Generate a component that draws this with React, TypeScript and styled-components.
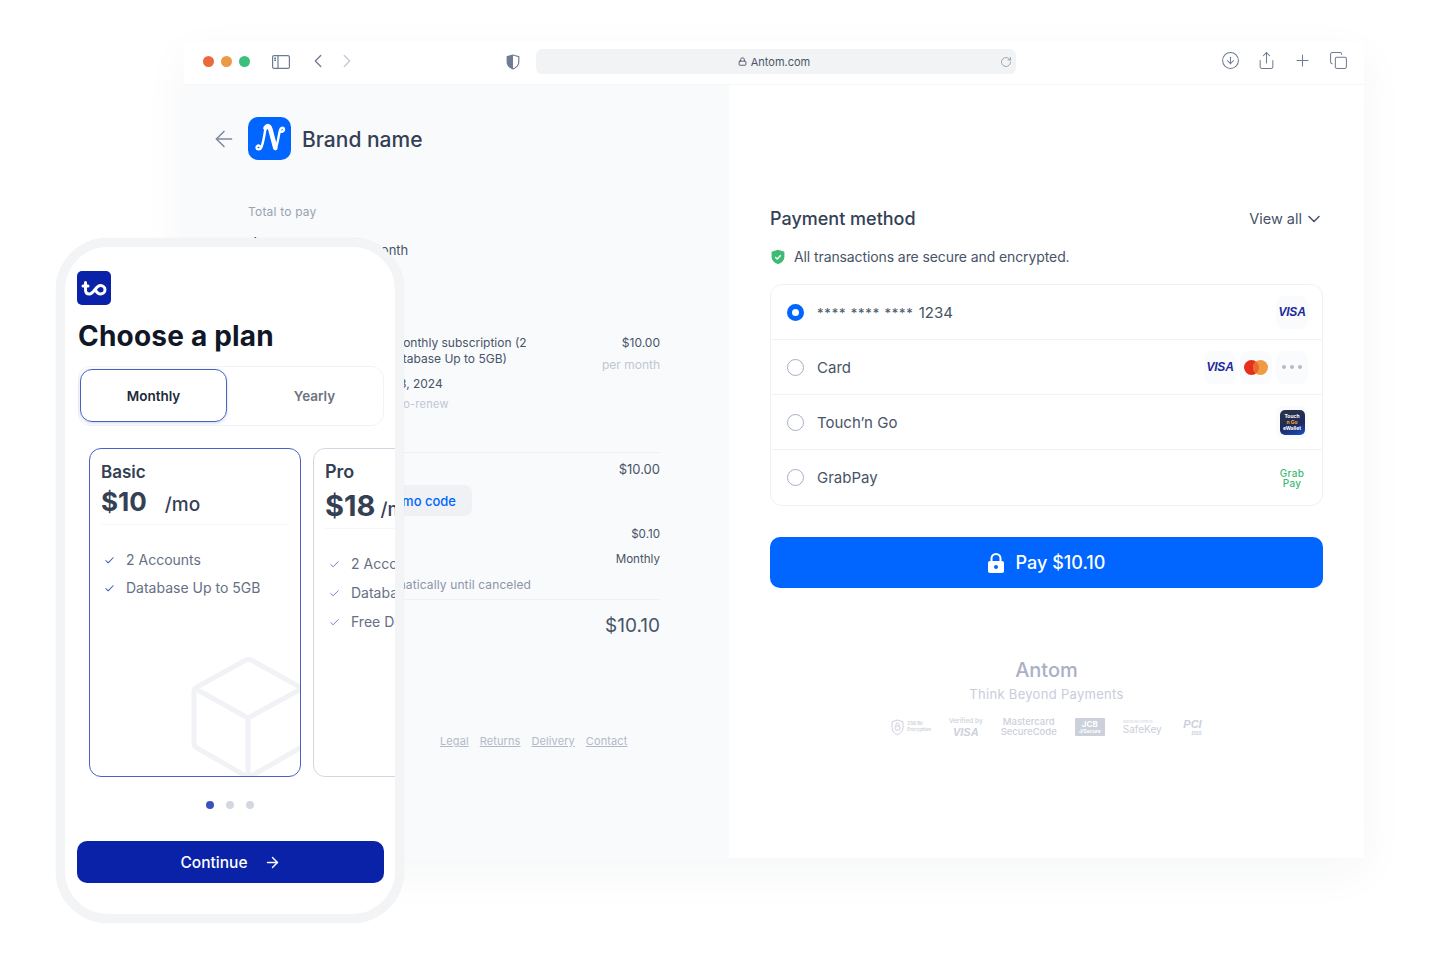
import styled, { createGlobalStyle } from 'styled-components';
import { ArrowLeft, ArrowRight, Check, ChevronDown, ChevronLeft, ChevronRight, CircleArrowDown, Copy, Lock, Plus, RotateCw, Share } from 'lucide-react';

const GlobalStyle = createGlobalStyle`
  html, body { margin: 0; padding: 0; background: #fff; }
  * { box-sizing: border-box; }
  body { font-family: Inter, "Liberation Sans", sans-serif; color: #344054; }
`

const Stage = styled.div`
  position: relative;
  width: 1440px;
  height: 960px;
  overflow: hidden;
  background: #fff;
`

/* browser window */
const BrowserWindow = styled.div`
  position: absolute;
  left: 184px;
  top: 42px;
  width: 1180px;
  height: 816px;
  display: flex;
  flex-direction: column;
  background: #fff;
  box-shadow: 0 14px 44px rgba(30, 40, 70, 0.045);
`
const Toolbar = styled.div`
  height: 43px;
  flex: none;
  display: flex;
  align-items: center;
  padding: 0 16px 3px 19px;
  border-bottom: 1px solid #f6f7f9;
  color: #6f7b93;
`
const Lights = styled.div`
  display: flex;
  gap: 7px;
  margin-right: 22px;
`
const Light = styled.span<{ $color: string }>`
  width: 11px;
  height: 11px;
  border-radius: 50%;
  background: ${p => p.$color};
`
const NavGroup = styled.div`
  display: flex;
  gap: 7px;
  margin: 0 148px 2px 17px;
`
const AddressBar = styled.div`
  width: 480px;
  height: 25px;
  margin-left: 16px;
  padding: 0 4px 0 0;
  display: grid;
  grid-template-columns: 1fr auto 1fr;
  align-items: center;
  background: #f2f3f5;
  border-radius: 6px;
  font-size: 11px;
  color: #4b5568;
`
const AddressText = styled.span`
  grid-column: 2;
  display: flex;
  align-items: center;
  gap: 4px;
`
const Reload = styled.span`
  justify-self: end;
  display: flex;
  color: #7d889e;
`
const ToolIcons = styled.div`
  margin: 0 0 2px auto;
  display: flex;
  gap: 17px;
`
const Body = styled.div`
  flex: 1;
  display: flex;
  min-height: 0;
`

/* order summary */
const SummaryPane = styled.div`
  width: 545px;
  flex: none;
  padding: 32px 69px 0 32px;
  background: #f9fafc;
`
const BrandRow = styled.div`
  display: flex;
  align-items: center;
  color: #7d889e;
`
const BackSlot = styled.span`
  display: flex;
  width: 26px;
  margin: 0 11px 0 -5px;
`
const BrandName = styled.span`
  margin: 1px 0 0 11px;
  font-size: 21px;
  font-weight: 500;
  color: #344054;
`
const SummaryBody = styled.div`
  padding-left: 32px;
`
const TotalLabel = styled.div`
  margin-top: 43px;
  font-size: 12px;
  line-height: 18px;
  letter-spacing: 0.2px;
  color: #98a2b3;
`
const TotalLine = styled.div`
  margin-top: 8px;
  display: flex;
  align-items: baseline;
  gap: 31px;
  font-size: 13px;
  line-height: 36px;
  color: #475467;
`
const TotalAmount = styled.span`
  font-size: 22px;
  font-weight: 600;
  color: #344054;
`
const ItemRow = styled.div`
  margin-top: 67px;
  display: flex;
  justify-content: space-between;
`
const ItemThumb = styled.div`
  width: 72px;
  height: 72px;
  flex: none;
  border-radius: 10px;
  background: #eef0f4;
`
const ItemText = styled.div`
  width: 205px;
  margin-left: 7px;
  margin-right: auto;
  font-size: 12px;
  line-height: 16px;
  color: #475467;
`
const ItemDate = styled.div`
  margin-top: 9px;
`
const ItemNote = styled.div`
  margin-top: 4px;
  font-size: 11px;
  letter-spacing: 0.25px;
  color: #c0c6d4;
`
const ItemPrice = styled.div`
  text-align: right;
  font-size: 12px;
  line-height: 16px;
  color: #475467;
`
const PerMonth = styled.div`
  margin-top: 6px;
  color: #c0c6d4;
`
const Divider = styled.div<{ $mt: number }>`
  height: 1px;
  margin-top: ${p => p.$mt}px;
  background: #eef0f3;
`
const LineRow = styled.div<{ $mt: number; $size?: number; $muted?: boolean }>`
  margin-top: ${p => p.$mt}px;
  display: flex;
  justify-content: space-between;
  font-size: ${p => p.$size ?? 12}px;
  line-height: 18px;
  letter-spacing: ${p => (p.$muted ? '0.12px' : '0')};
  color: ${p => (p.$muted ? '#8c96a8' : '#475467')};
`
const PromoChip = styled.button`
  display: block;
  margin: 7px 0 0 102px;
  height: 31px;
  width: 122px;
  padding: 0 16px 0 0;
  border: 0;
  border-radius: 8px;
  background: #f0f1f4;
  text-align: right;
  white-space: nowrap;
  font: 500 13px Inter, sans-serif;
  color: #0066ff;
`
const FooterLinks = styled.div`
  margin: 99px 0 0 192px;
  display: flex;
  gap: 11px;
  font-size: 11px;
  letter-spacing: 0.1px;
  color: #b3b9c8;
`
const FooterLink = styled.span`
  text-decoration: underline;
`

/* payment pane */
const PaymentPane = styled.div`
  flex: 1;
  padding: 122px 41px 0;
`
const PaymentHead = styled.div`
  display: flex;
  align-items: center;
  justify-content: space-between;
  line-height: 24px;
`
const PaymentTitle = styled.h2`
  margin: 0;
  font-size: 18px;
  font-weight: 500;
  color: #344054;
`
const ViewAll = styled.span`
  display: flex;
  align-items: center;
  gap: 2px;
  margin-right: -1px;
  font-size: 14.5px;
  color: #475467;
`
const SecureLine = styled.div`
  margin-top: 16px;
  display: flex;
  align-items: center;
  gap: 9px;
  padding-left: 1px;
  font-size: 14px;
  line-height: 20px;
  letter-spacing: -0.1px;
  color: #475467;
`
const MethodList = styled.div`
  margin-top: 17px;
  border: 1px solid #f0f1f4;
  border-radius: 12px;
`
const MethodRow = styled.div`
  height: 55px;
  display: flex;
  align-items: center;
  padding: 0 14px 0 16px;
  border-bottom: 1px solid #f1f2f5;
  &:last-child { border-bottom: 0; }
`
const Radio = styled.span<{ $on?: boolean }>`
  width: 17px;
  height: 17px;
  flex: none;
  border-radius: 50%;
  background: #fff;
  border: ${p => (p.$on ? '5px solid #0066ff' : '1.5px solid #a6aec6')};
`
const MethodName = styled.span`
  margin-left: 13px;
  font-size: 15px;
  color: #475467;
`
const Stars = styled.span`
  font-size: 13px;
  letter-spacing: 0.8px;
  margin-right: 5px;
`
const MethodIcons = styled.div`
  margin-left: auto;
  display: flex;
  gap: 4px;
`
const IconBox = styled.span<{ $plain?: boolean }>`
  width: 32px;
  height: 33px;
  display: flex;
  align-items: center;
  justify-content: center;
  border-radius: 8px;
  background: ${p => (p.$plain ? 'transparent' : '#fafbfc')};
`
const VisaMark = styled.span`
  font: italic 700 12px "Liberation Sans", sans-serif;
  letter-spacing: -0.2px;
  color: #1b2a9c;
`
const MoreDots = styled.span`
  display: flex;
  gap: 4px;
`
const MoreDot = styled.i`
  width: 4px;
  height: 4px;
  border-radius: 50%;
  background: #b3b9c8;
`
const TngTile = styled.span`
  width: 25px;
  height: 25px;
  display: flex;
  flex-direction: column;
  align-items: center;
  justify-content: center;
  border-radius: 5px;
  background: linear-gradient(160deg, #2c3346 0%, #1c2a5c 60%, #1a4fd0 100%);
  font-size: 5px;
  line-height: 6px;
  font-weight: 700;
  color: #fff;
`
const TngGo = styled.span`
  color: #f5a623;
`
const GrabMark = styled.span`
  display: flex;
  flex-direction: column;
  align-items: center;
  font-size: 10px;
  line-height: 10px;
  letter-spacing: 0.3px;
  font-weight: 500;
  color: #3fba75;
`
const PayButton = styled.button`
  width: 100%;
  height: 51px;
  margin-top: 31px;
  display: flex;
  align-items: center;
  justify-content: center;
  gap: 12px;
  border: 0;
  border-radius: 10px;
  background: #0066ff;
  font: 500 18px Inter, sans-serif;
  color: #fff;
`
const Trust = styled.div`
  margin-top: 70px;
  display: flex;
  flex-direction: column;
  align-items: center;
`
const AntomMark = styled.div`
  font-size: 20px;
  line-height: 24px;
  font-weight: 500;
  color: #a9b0c5;
`
const Tagline = styled.div`
  margin-top: 3px;
  font-size: 13px;
  line-height: 18px;
  letter-spacing: 0.3px;
  color: #c8cdda;
`
const BadgeRow = styled.div`
  margin-top: 13px;
  display: flex;
  align-items: center;
  gap: 18px;
  color: #ccd0db;
`
const BadgeSeal = styled.div`
  display: flex;
  align-items: center;
  gap: 3px;
  font-size: 4.5px;
  line-height: 6px;
  font-weight: 600;
`
const BadgeStack = styled.div<{ $size?: number }>`
  display: flex;
  flex-direction: column;
  align-items: center;
  font-size: ${p => p.$size ?? 9.5}px;
  line-height: 10px;
  font-weight: 500;
`
const BadgeVisa = styled.span`
  font: italic 700 11px "Liberation Sans", sans-serif;
`
const JcbBadge = styled.div`
  width: 30px;
  height: 18px;
  display: flex;
  flex-direction: column;
  align-items: center;
  justify-content: center;
  border-radius: 1px;
  background: #ccd0db;
  font-size: 8px;
  line-height: 8px;
  font-weight: 700;
  color: #fff;
`
const JcbSmall = styled.span`
  font-size: 5px;
  line-height: 6px;
`
const SafeKey = styled.div`
  display: flex;
  flex-direction: column;
  font-size: 10px;
  line-height: 11px;
`
const SafeKeySmall = styled.span`
  font-size: 3px;
  line-height: 4px;
`
const PciBadge = styled.div`
  display: flex;
  flex-direction: column;
  align-items: flex-end;
  width: 22px;
  font: italic 700 11px "Liberation Sans", sans-serif;
  line-height: 12px;
`
const PciSmall = styled.span`
  font-size: 5px;
  line-height: 6px;
`

/* phone */
const Phone = styled.div`
  position: absolute;
  left: 56px;
  top: 238px;
  width: 348px;
  height: 685px;
  border: 9px solid #f3f4f6;
  border-radius: 52px;
  background: #fff;
  overflow: hidden;
  padding-top: 24px;
  box-shadow: 0 0 1px rgba(120, 130, 150, 0.2);
`
const PhoneTitle = styled.h1`
  margin: 14px 0 13px 13px;
  font-size: 28px;
  line-height: 34px;
  font-weight: 700;
  letter-spacing: 0.2px;
  color: #101828;
`
const LogoWrap = styled.div`
  margin-left: 12px;
  display: flex;
`
const Toggle = styled.div`
  margin-left: 13px;
  width: 306px;
  height: 60px;
  padding: 2px 2px 3px 1px;
  display: flex;
  border: 1px solid #f2f3f5;
  border-radius: 12px;
`
const ToggleActive = styled.div`
  width: 147px;
  display: flex;
  align-items: center;
  justify-content: center;
  border: 1.5px solid #4a61c6;
  border-radius: 12px;
  box-shadow: 0 1px 3px rgba(60, 80, 180, 0.25);
  font-size: 13.5px;
  font-weight: 600;
  color: #1d2939;
`
const ToggleIdle = styled.div`
  flex: 1;
  padding-left: 21px;
  display: flex;
  align-items: center;
  justify-content: center;
  font-size: 13.5px;
  font-weight: 600;
  color: #6b7280;
`
const Carousel = styled.div`
  margin-top: 22px;
  padding-left: 24px;
  display: flex;
  gap: 12px;
`
const PlanCard = styled.div<{ $active?: boolean }>`
  position: relative;
  width: 212px;
  height: 329px;
  flex: none;
  padding: 12px 11px;
  overflow: hidden;
  border: 1px solid ${p => (p.$active ? '#4a61c6' : '#d3d7e2')};
  border-radius: 12px;
`
const PlanName = styled.div<{ $size: number }>`
  font-size: ${p => p.$size}px;
  line-height: 22px;
  font-weight: 600;
  color: #344054;
`
const PlanPrice = styled.div<{ $size: number; $mt: number; $gap: number }>`
  margin-top: ${p => p.$mt}px;
  display: flex;
  align-items: baseline;
  gap: ${p => p.$gap}px;
  height: 34px;
  line-height: 34px;
  white-space: nowrap;
  font-size: ${p => p.$size}px;
  font-weight: 700;
  color: #344054;
`
const PlanUnit = styled.span`
  font-size: 19px;
  font-weight: 500;
`
const PlanRule = styled.div`
  margin-top: 5px;
  height: 1px;
  background: #f6f7f9;
`
const Features = styled.div<{ $mt: number; $step: number; $pl?: number }>`
  margin-top: ${p => p.$mt}px;
  padding-left: ${p => p.$pl ?? 0}px;
  display: flex;
  flex-direction: column;
  gap: ${p => p.$step}px;
`
const Feature = styled.div`
  display: flex;
  align-items: center;
  gap: 10px;
  padding-left: 3px;
  white-space: nowrap;
  font-size: 14px;
  line-height: 20px;
  color: #667085;
`
const CheckSlot = styled.span`
  display: flex;
  width: 12px;
  color: #3a52c0;
`
const CubeMark = styled.svg`
  position: absolute;
  left: 100px;
  top: 207px;
`
const Dots = styled.div`
  margin-top: 24px;
  display: flex;
  justify-content: center;
  gap: 12px;
`
const Dot = styled.span<{ $on?: boolean }>`
  width: 8px;
  height: 8px;
  border-radius: 50%;
  background: ${p => (p.$on ? '#3a52c0' : '#d3d7e2')};
`
const ContinueButton = styled.button`
  width: 307px;
  height: 42px;
  margin: 32px 0 0 12px;
  display: flex;
  align-items: center;
  justify-content: center;
  gap: 16px;
  border: 0;
  border-radius: 10px;
  background: #0a22a8;
  font: 500 15.5px Inter, sans-serif;
  color: #fff;
`

const SidebarIcon = () => (
  <svg width="18" height="14" viewBox="0 0 18 14" fill="none" stroke="currentColor" strokeWidth="1.2">
    <rect x="0.6" y="0.6" width="16.8" height="12.8" rx="1.5" />
    <path d="M6 0.6V13.4" />
    <path d="M2.2 3.2H4M2.2 5.2H4" strokeWidth="1.4" />
  </svg>
)

const HalfShield = () => (
  <svg width="14" height="16" viewBox="0 0 14 16">
    <path d="M7 1 1.2 2.6v5.2c0 3.4 2.5 5.9 5.8 7.2 3.3-1.3 5.8-3.8 5.8-7.2V2.6L7 1Z" fill="none" stroke="#6f7b93" strokeWidth="1.2" />
    <path d="M7 1 1.2 2.6v5.2c0 3.4 2.5 5.9 5.8 7.2V1Z" fill="#6f7b93" />
  </svg>
)

const SecureShield = () => (
  <svg width="14" height="16" viewBox="0 0 14 16">
    <path d="M7 .8 .6 2.8v5c0 3.6 2.7 6 6.4 7.4 3.7-1.4 6.4-3.8 6.4-7.4v-5L7 .8Z" fill="#3fba75" />
    <path d="m4.2 8 2 2 3.6-3.8" fill="none" stroke="#fff" strokeWidth="1.4" />
  </svg>
)

const BrandLogo = () => (
  <svg width="43" height="43" viewBox="0 0 43 43">
    <rect width="43" height="43" rx="10" fill="#0066ff" />
    <g fill="none" stroke="#fff" strokeLinecap="round">
      <path d="M17.500 11c-1 7-2 14-4 19-1 3-4.500 3-5 1-.3-2 2-3 3-2" strokeWidth="2.400" />
      <path d="M17.500 11c2-3 4-2 4.800 1l5 19" strokeWidth="4.600" />
      <path d="M27.500 32c2.500-6 3-13 4.500-19 .8-3 4-3 4-.5 0 2-3 3-4 1.500" strokeWidth="2.400" />
    </g>
  </svg>
)

const PlanLogo = () => (
  <svg width="34" height="34" viewBox="0 0 34 34">
    <rect width="34" height="34" rx="5" fill="#0a22a8" />
    <g fill="none" stroke="#fff" strokeWidth="3" strokeLinecap="round">
      <path d="M6 15h5M8.500 11.500v7.500c0 2.600 1.700 4 4 4 4.500 0 6-8.500 11-8.500 2.600 0 4.500 2 4.500 4.300s-1.900 4.200-4.500 4.200c-2.800 0-4-2-5.200-3.800" />
    </g>
  </svg>
)

const MastercardMark = () => (
  <svg width="24" height="15" viewBox="0 0 24 15">
    <circle cx="7.500" cy="7.500" r="7.500" fill="#e5301e" />
    <circle cx="16.500" cy="7.500" r="7.500" fill="#ef9a44" />
    <path d="M12 1.500a7.500 7.500 0 0 1 0 12 7.500 7.500 0 0 1 0-12Z" fill="#ec6a2c" />
  </svg>
)

const SolidLock = () => (
  <svg width="16" height="20" viewBox="0 0 16 20">
    <path d="M3.500 9V5.500a4.500 4.500 0 0 1 9 0V9" fill="none" stroke="#fff" strokeWidth="2" />
    <rect y="8" width="16" height="12" rx="2" fill="#fff" />
    <circle cx="8" cy="14" r="2" fill="#0066ff" />
  </svg>
)

const SealIcon = () => (
  <svg width="13" height="17" viewBox="0 0 13 17" fill="none" stroke="currentColor">
    <path d="M6.500 1 1 2.800v5.700c0 3.500 2.300 5.900 5.500 7.300 3.200-1.400 5.500-3.800 5.500-7.300V2.800L6.500 1Z" />
    <rect x="4" y="7" width="5" height="4" rx="1" />
    <path d="M5 7V5.500a1.500 1.500 0 0 1 3 0V7" />
  </svg>
)

export default function App() {
  return (
    <Stage>
      <GlobalStyle />
      <BrowserWindow>
        <Toolbar>
          <Lights>
            <Light $color="#ea6a3c" />
            <Light $color="#ec9a45" />
            <Light $color="#3dbf7b" />
          </Lights>
          <SidebarIcon />
          <NavGroup>
            <ChevronLeft size={22} strokeWidth={1.4} />
            <ChevronRight size={22} strokeWidth={1.4} color="#c3c9d6" />
          </NavGroup>
          <HalfShield />
          <AddressBar>
            <AddressText><Lock size={9} strokeWidth={2.4} />Antom.com</AddressText>
            <Reload><RotateCw size={12} strokeWidth={1.4} /></Reload>
          </AddressBar>
          <ToolIcons>
            <CircleArrowDown size={19} strokeWidth={1.3} />
            <Share size={19} strokeWidth={1.3} />
            <Plus size={19} strokeWidth={1.3} />
            <Copy size={19} strokeWidth={1.3} />
          </ToolIcons>
        </Toolbar>
        <Body>
          <SummaryPane>
            <BrandRow>
              <BackSlot><ArrowLeft size={26} strokeWidth={1.4} /></BackSlot>
              <BrandLogo />
              <BrandName>Brand name</BrandName>
            </BrandRow>
            <SummaryBody>
              <TotalLabel>Total to pay</TotalLabel>
              <TotalLine><TotalAmount>$10.10</TotalAmount>per month</TotalLine>
              <ItemRow>
                <ItemThumb />
                <ItemText>
                  Basic Plan: Monthly subscription (2 Accounts, Database Up to 5GB)
                  <ItemDate>Renews Jan 3, 2024</ItemDate>
                  <ItemNote>Billed with auto-renew</ItemNote>
                </ItemText>
                <ItemPrice>
                  $10.00
                  <PerMonth>per month</PerMonth>
                </ItemPrice>
              </ItemRow>
              <Divider $mt={40} />
              <LineRow $mt={7} $size={13}><span>Subtotal</span><span>$10.00</span></LineRow>
              <PromoChip>Add promo code</PromoChip>
              <LineRow $mt={9} $size={11.6}><span>Tax (SST 1%)</span><span>$0.10</span></LineRow>
              <LineRow $mt={7} $size={11.6}><span>Billing cycle</span><span>Monthly</span></LineRow>
              <LineRow $mt={8} $muted><span>Subscription renews automatically until canceled</span></LineRow>
              <Divider $mt={5} />
              <LineRow $mt={17} $size={19}><span>Total</span><span>$10.10</span></LineRow>
              <FooterLinks>
                <FooterLink>Legal</FooterLink>
                <FooterLink>Returns</FooterLink>
                <FooterLink>Delivery</FooterLink>
                <FooterLink>Contact</FooterLink>
              </FooterLinks>
            </SummaryBody>
          </SummaryPane>
          <PaymentPane>
            <PaymentHead>
              <PaymentTitle>Payment method</PaymentTitle>
              <ViewAll>View all <ChevronDown size={20} strokeWidth={1.8} /></ViewAll>
            </PaymentHead>
            <SecureLine><SecureShield />All transactions are secure and encrypted.</SecureLine>
            <MethodList>
              <MethodRow>
                <Radio $on />
                <MethodName><Stars>**** **** ****</Stars>1234</MethodName>
                <MethodIcons><IconBox><VisaMark>VISA</VisaMark></IconBox></MethodIcons>
              </MethodRow>
              <MethodRow>
                <Radio />
                <MethodName>Card</MethodName>
                <MethodIcons>
                  <IconBox><VisaMark>VISA</VisaMark></IconBox>
                  <IconBox><MastercardMark /></IconBox>
                  <IconBox><MoreDots><MoreDot /><MoreDot /><MoreDot /></MoreDots></IconBox>
                </MethodIcons>
              </MethodRow>
              <MethodRow>
                <Radio />
                <MethodName>Touch’n Go</MethodName>
                <MethodIcons><IconBox><TngTile>Touch<TngGo>n Go</TngGo>eWallet</TngTile></IconBox></MethodIcons>
              </MethodRow>
              <MethodRow>
                <Radio />
                <MethodName>GrabPay</MethodName>
                <MethodIcons><IconBox $plain><GrabMark>Grab<span>Pay</span></GrabMark></IconBox></MethodIcons>
              </MethodRow>
            </MethodList>
            <PayButton><SolidLock />Pay $10.10</PayButton>
            <Trust>
              <AntomMark>Antom</AntomMark>
              <Tagline>Think Beyond Payments</Tagline>
              <BadgeRow>
                <BadgeSeal><SealIcon /><div>256 Bit<br />Encryption</div></BadgeSeal>
                <BadgeStack $size={6.5}>Verified by<BadgeVisa>VISA</BadgeVisa></BadgeStack>
                <BadgeStack>Mastercard<span>SecureCode</span></BadgeStack>
                <JcbBadge>JCB<JcbSmall>J/Secure</JcbSmall></JcbBadge>
                <SafeKey><SafeKeySmall>AMERICAN EXPRESS</SafeKeySmall>SafeKey</SafeKey>
                <PciBadge>PCI<PciSmall>DSS</PciSmall></PciBadge>
              </BadgeRow>
            </Trust>
          </PaymentPane>
        </Body>
      </BrowserWindow>

      <Phone>
        <LogoWrap><PlanLogo /></LogoWrap>
        <PhoneTitle>Choose a plan</PhoneTitle>
        <Toggle>
          <ToggleActive>Monthly</ToggleActive>
          <ToggleIdle>Yearly</ToggleIdle>
        </Toggle>
        <Carousel>
          <PlanCard $active>
            <PlanName $size={17}>Basic</PlanName>
            <PlanPrice $size={26} $mt={2} $gap={18}>$10<PlanUnit>/mo</PlanUnit></PlanPrice>
            <PlanRule />
            <Features $mt={25} $step={8}>
              <Feature><CheckSlot><Check size={11} strokeWidth={2.2} /></CheckSlot>2 Accounts</Feature>
              <Feature><CheckSlot><Check size={11} strokeWidth={2.2} /></CheckSlot>Database Up to 5GB</Feature>
            </Features>
            <CubeMark width="120" height="124" viewBox="0 0 120 124" fill="none" stroke="#f1f2f5" strokeWidth="5" strokeLinejoin="round">
              <path d="M54 5 7 31c-2 1-3 3-3 5v51c0 2 1 4 3 5l47 27c3 2 6 2 9 0l47-27c2-1 3-3 3-5V36c0-2-1-4-3-5L63 5c-3-2-6-2-9 0Z" />
              <path d="M6 33l52 29 53-29M58 62v60" />
            </CubeMark>
          </PlanCard>
          <PlanCard>
            <PlanName $size={18}>Pro</PlanName>
            <PlanPrice $size={29} $mt={6} $gap={5}>$18<PlanUnit>/mo</PlanUnit></PlanPrice>
            <PlanRule />
            <Features $mt={25} $step={9} $pl={1}>
              <Feature><CheckSlot><Check size={11} strokeWidth={1.6} /></CheckSlot>2 Accounts</Feature>
              <Feature><CheckSlot><Check size={11} strokeWidth={1.6} /></CheckSlot>Database Up to 10GB</Feature>
              <Feature><CheckSlot><Check size={11} strokeWidth={1.6} /></CheckSlot>Free Domain</Feature>
            </Features>
          </PlanCard>
        </Carousel>
        <Dots><Dot $on /><Dot /><Dot /></Dots>
        <ContinueButton>Continue <ArrowRight size={17} strokeWidth={2} /></ContinueButton>
      </Phone>
    </Stage>
  )
}
